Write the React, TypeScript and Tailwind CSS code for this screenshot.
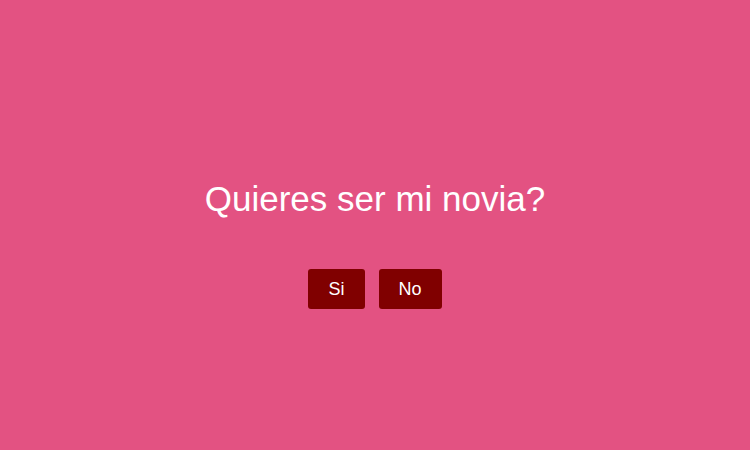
export default function App() {
  return (
    <div className="flex h-[450px] w-full flex-col items-center justify-center bg-[#e35282] pt-[38px] font-['Liberation_Sans',Arial,sans-serif] text-white">
      <h1 className="text-[35px] leading-[40px]">Quieres ser mi novia?</h1>
      <div className="mt-[50px] flex gap-[14px]">
        <button className="rounded-[3px] bg-[#800000] px-5 py-2.5 text-[18px] leading-5 text-white">Si</button>
        <button className="rounded-[3px] bg-[#800000] px-5 py-2.5 text-[18px] leading-5 text-white">No</button>
      </div>
    </div>
  );
}
